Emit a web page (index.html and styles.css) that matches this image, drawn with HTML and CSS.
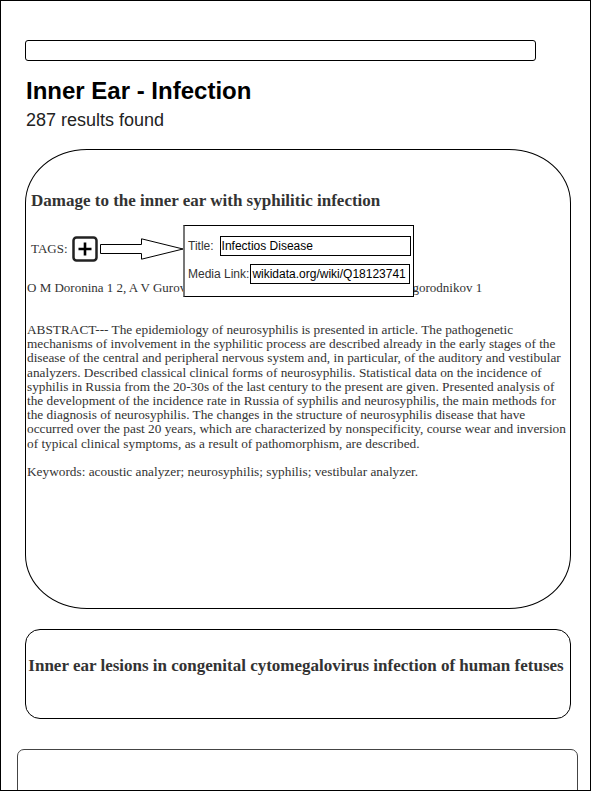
FILE: index.html
```html
<!DOCTYPE html>
<html lang="en">
<head>
    <meta charset="UTF-8">
    <meta name="viewport" content="width=device-width, initial-scale=1.0">
    <title>Inner Ear - Infection</title>
    <link rel="stylesheet" href="styles.css">
</head>
<body>
    <div class="page">
        <div class="search-bar"></div>

        <h1>Inner Ear - Infection</h1>
        <p class="count">287 results found</p>

        <div class="result result-open">
            <h2>Damage to the inner ear with syphilitic infection</h2>

            <div class="tags">
                <span class="tags-label">TAGS:</span>
                <span class="add-btn">
                    <svg width="26" height="26" viewBox="0 0 26 26">
                        <rect x="1.5" y="1.5" width="23" height="23" rx="3" fill="#fff" stroke="#222" stroke-width="2.5"/>
                        <path d="M13 6.5v13M6.5 13h13" stroke="#000" stroke-width="2.6"/>
                    </svg>
                </span>
                <svg class="arrow" width="84" height="22" viewBox="0 0 84 22">
                    <path d="M0.5 6.5H41.5V0.8L83 11L41.5 21.2V15.5H0.5Z" fill="#fff" stroke="#000" stroke-width="1"/>
                </svg>

                <div class="tag-popup">
                    <div class="popup-row">
                        <label>Title:</label>
                        <input type="text" class="title-input" value="Infectios Disease">
                    </div>
                    <div class="popup-row">
                        <label>Media Link:</label>
                        <input type="text" value="wikidata.org/wiki/Q18123741">
                    </div>
                </div>
            </div>

            <p class="authors">O M Doronina 1 2, A V Gurov 1 2, M V Lozhnikova 1, N E Kim 1, A A Ogorodnikov 1</p>

            <p class="abstract">ABSTRACT--- The epidemiology of neurosyphilis is presented in article. The pathogenetic<br>
                mechanisms of involvement in the syphilitic process are described already in the early stages of the<br>
                disease of the central and peripheral nervous system and, in particular, of the auditory and vestibular<br>
                analyzers. Described classical clinical forms of neurosyphilis. Statistical data on the incidence of<br>
                syphilis in Russia from the 20-30s of the last century to the present are given. Presented analysis of<br>
                the development of the incidence rate in Russia of syphilis and neurosyphilis, the main methods for<br>
                the diagnosis of neurosyphilis. The changes in the structure of neurosyphilis disease that have<br>
                occurred over the past 20 years, which are characterized by nonspecificity, course wear and inversion<br>
                of typical clinical symptoms, as a result of pathomorphism, are described.</p>

            <p class="keywords">Keywords: acoustic analyzer; neurosyphilis; syphilis; vestibular analyzer.</p>
        </div>

        <div class="result result-closed">
            <h2>Inner ear lesions in congenital cytomegalovirus infection of human fetuses</h2>
        </div>

        <div class="result-stub"></div>
    </div>
</body>
</html>
```

FILE: styles.css
```css
body {
    margin: 0;
    padding: 0;
    background: #fff;
    color: #000;
    font-family: "Liberation Sans", Arial, sans-serif;
}
.page {
    width: 591px;
    height: 791px;
    box-sizing: border-box;
    border: 1px solid #000;
    overflow: hidden;
    padding: 39px 20px 0 24px;
}
.search-bar {
    width: 509px;
    height: 19px;
    border: 1px solid #000;
    border-radius: 3px;
}
h1 {
    margin: 16px 0 0 1px;
    font-size: 24px;
    line-height: 28px;
    font-weight: bold;
}
.count {
    margin: 4px 0 0 1px;
    font-size: 18px;
    line-height: 22px;
    color: #222;
}
.result {
    border: 1px solid #000;
    font-family: "Liberation Serif", Georgia, serif;
    color: #333;
}
.result h2 {
    font-size: 17px;
    font-weight: bold;
    margin: 0;
    line-height: 20px;
}
.result-open {
    margin-top: 18px;
    width: 546px;
    height: 460px;
    border-radius: 62px / 54px;
    padding: 41px 0 0 1px;
    box-sizing: border-box;
}
.result-open h2 {
    padding-left: 4px;
}
.tags {
    position: relative;
    display: flex;
    align-items: center;
    margin-top: 25px;
    padding-left: 4px;
    height: 26px;
}
.tags-label {
    font-size: 13px;
    margin-right: 4px;
}
.add-btn {
    display: flex;
}
.arrow {
    margin-left: 2px;
}
.tag-popup {
    position: absolute;
    left: 156px;
    top: -11px;
    width: 231px;
    height: 72px;
    box-sizing: border-box;
    background: #fff;
    border: 1px solid #000;
    border-left: 2px solid #777;
    padding: 10px 0 0 3px;
    font-family: "Liberation Sans", Arial, sans-serif;
    color: #333;
}
.popup-row {
    display: flex;
    align-items: center;
    height: 20px;
    margin-bottom: 8px;
    white-space: nowrap;
}
.popup-row label {
    font-size: 12px;
    margin-right: 1px;
}
.popup-row input {
    font-family: "Liberation Sans", Arial, sans-serif;
    font-size: 12px;
    color: #000;
    border: 1px solid #000;
    border-radius: 0;
    height: 20px;
    box-sizing: border-box;
    padding: 0 1px;
    width: 160px;
    outline: none;
}
.popup-row .title-input {
    margin-left: 5px;
    width: 191px;
}
.authors {
    font-size: 13px;
    line-height: 16px;
    margin: 18px 0 0 0;
}
.abstract {
    font-size: 13.3px;
    line-height: 14.2px;
    margin: 27px 0 0 0;
    white-space: nowrap;
}
.keywords {
    font-size: 13.3px;
    line-height: 14px;
    margin: 14px 0 0 0;
}
.result-closed {
    margin-top: 20px;
    width: 546px;
    height: 90px;
    box-sizing: border-box;
    border-radius: 15px;
    padding: 26px 4px 0 0;
    text-align: center;
}
.result-stub {
    margin: 30px 0 0 -8px;
    width: 559px;
    height: 50px;
    border: 1px solid #444;
    border-radius: 7px;
}
```
